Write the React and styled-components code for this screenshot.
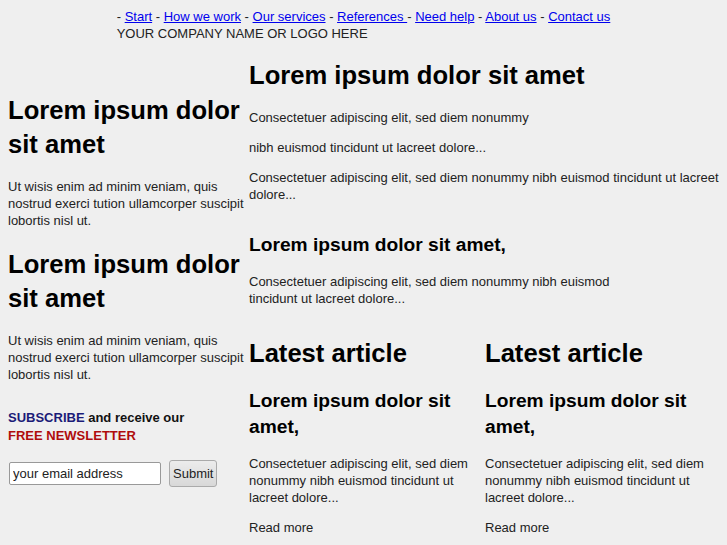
import React from 'react';
import styled, { createGlobalStyle } from 'styled-components';

const GlobalStyle = createGlobalStyle`
	html, body {
		background: #efefef;
	}
	body {
		margin: 8px 8px 0 8px;
		font-family: 'Liberation Sans', Arial, sans-serif;
		color: #222;
		font-size: 13px;
	}
`;

const navLinks = ['Start', 'How we work', 'Our services', 'References ', 'Need help', 'About us', 'Contact us'];

const articles = [1, 2];

const App = () => {
	return (
		<>
			<GlobalStyle />
			<Header>
				<HeaderInner>
					<Nav>
						{navLinks.map((link) => (
							<span key={link}>
								{' - '}
								<a href='#'>{link}</a>
							</span>
						))}
					</Nav>
					<Company>YOUR COMPANY NAME OR LOGO HERE</Company>
				</HeaderInner>
			</Header>
			<Layout>
				<Sidebar>
					<BigTitle>Lorem ipsum dolor sit amet</BigTitle>
					<Text side>Ut wisis enim ad minim veniam, quis nostrud exerci tution ullamcorper suscipit lobortis nisl ut.</Text>
					<BigTitle>Lorem ipsum dolor sit amet</BigTitle>
					<Text side>Ut wisis enim ad minim veniam, quis nostrud exerci tution ullamcorper suscipit lobortis nisl ut.</Text>
					<Subscribe>
						<Highlight color='#1b1b78'>SUBSCRIBE</Highlight> and receive our
						<br />
						<Highlight color='#b00c0c'>FREE NEWSLETTER</Highlight>
					</Subscribe>
					<Form onSubmit={(e) => e.preventDefault()}>
						<EmailInput type='text' defaultValue='your email address' />
						<SubmitButton type='submit'>Submit</SubmitButton>
					</Form>
				</Sidebar>
				<Main>
					<BigTitle>Lorem ipsum dolor sit amet</BigTitle>
					<Text>Consectetuer adipiscing elit, sed diem nonummy</Text>
					<Text>nibh euismod tincidunt ut lacreet dolore...</Text>
					<Text>Consectetuer adipiscing elit, sed diem nonummy nibh euismod tincidunt ut lacreet dolore...</Text>
					<SubTitle>Lorem ipsum dolor sit amet,</SubTitle>
					<Text narrow>Consectetuer adipiscing elit, sed diem nonummy nibh euismod tincidunt ut lacreet dolore...</Text>
					<Articles>
						{articles.map((a) => (
							<Article key={a}>
								<BigTitle>Latest article</BigTitle>
								<SubTitle>Lorem ipsum dolor sit amet,</SubTitle>
								<Text>Consectetuer adipiscing elit, sed diem nonummy nibh euismod tincidunt ut lacreet dolore...</Text>
								<Text>Read more</Text>
							</Article>
						))}
					</Articles>
				</Main>
			</Layout>
		</>
	);
};

const Header = styled.div`
	display: flex;
	justify-content: center;
	line-height: 17px;
`;

const HeaderInner = styled.div`
	width: fit-content;
`;

const Nav = styled.div`
	a {
		color: #0000ee;
		text-decoration: underline;
	}
`;

const Company = styled.div`
	color: #222;
`;

const Layout = styled.div`
	display: grid;
	grid-template-columns: 241px 1fr;
`;

const Sidebar = styled.div`
	padding-top: 51px;
`;

const Main = styled.div`
	padding-top: 16px;
`;

const BigTitle = styled.h1`
	font-size: 25.6px;
	line-height: 34px;
	margin: 0 0 17px 0;
	color: #000;
	font-weight: bold;
`;

const SubTitle = styled.h2`
	font-size: 19.2px;
	line-height: 26px;
	margin: 29px 0 15px 0;
	color: #000;
	font-weight: bold;
`;

const Text = styled.p`
	margin: 0 0 ${(p) => (p.side ? '18px' : '13px')} 0;
	line-height: 17px;
	max-width: ${(p) => (p.narrow ? '380px' : 'none')};
`;

const Articles = styled.div`
	display: grid;
	grid-template-columns: 236px 236px;
	margin-top: 29px;

	${BigTitle} {
		margin-bottom: 18px;
	}

	${SubTitle} {
		margin-top: 0;
	}
`;

const Article = styled.div``;

const Subscribe = styled.div`
	font-weight: bold;
	line-height: 18px;
	margin-top: 26px;
	color: #111;
`;

const Highlight = styled.span`
	color: ${(p) => p.color};
`;

const Form = styled.form`
	display: flex;
	align-items: center;
	gap: 8px;
	margin-top: 15px;
	padding-left: 1px;
`;

const EmailInput = styled.input`
	box-sizing: border-box;
	width: 152px;
	height: 23px;
	padding: 1px 3px;
	border: 1px solid #999;
	border-radius: 2px;
	background: #fff;
	font-family: 'Liberation Sans', Arial, sans-serif;
	font-size: 13px;
	color: #222;
`;

const SubmitButton = styled.button`
	box-sizing: border-box;
	height: 27px;
	padding: 0 3px;
	border: 1px solid #aaa;
	border-radius: 3px;
	background: linear-gradient(#ececec, #d8d8d8);
	font-family: 'Liberation Sans', Arial, sans-serif;
	font-size: 13px;
	color: #222;
`;

export default App;
